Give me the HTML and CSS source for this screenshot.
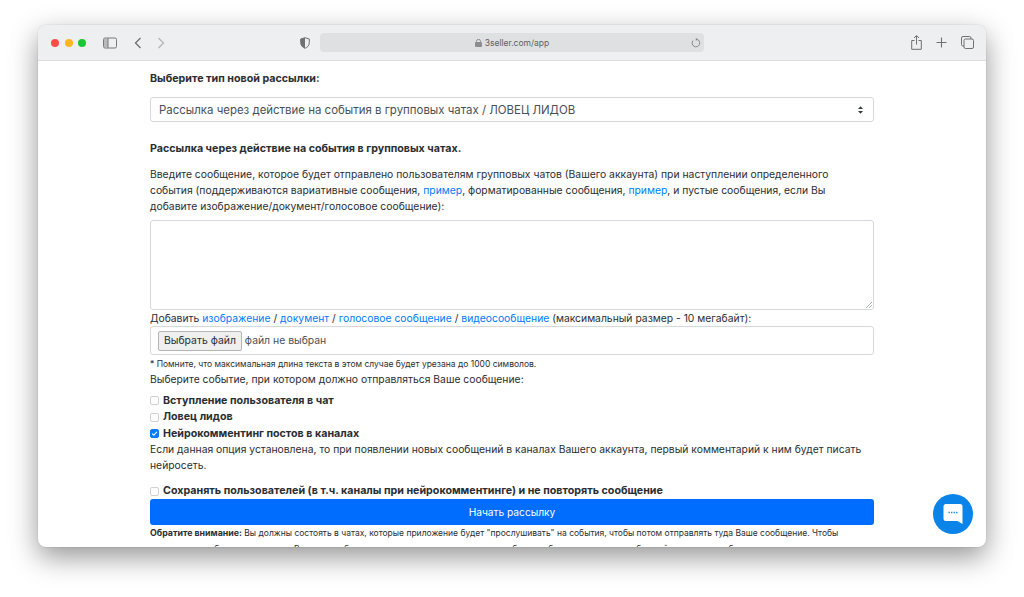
FILE: index.html
```html
<!DOCTYPE html>
<html lang="ru">
<head>
<meta charset="utf-8">
<title>3seller</title>
<link rel="stylesheet" href="styles.css">
</head>
<body>
<div class="window">
  <header class="toolbar">
    <div class="lights"><i class="light red"></i><i class="light yellow"></i><i class="light green"></i></div>
    <svg class="ic sidebar" width="14" height="12" viewBox="0 0 14 12"><rect x=".5" y="1" width="13" height="10" rx="1.5" fill="none" stroke="#77797c"/><path d="M1 2h4v8H1z" fill="#b9babc"/><path d="M5 1v10" stroke="#77797c"/></svg>
    <svg class="ic back" width="8" height="12" viewBox="0 0 8 12"><path d="M6.5 1 1.5 6l5 5" fill="none" stroke="#6e7073" stroke-width="1.3"/></svg>
    <svg class="ic fwd" width="8" height="12" viewBox="0 0 8 12"><path d="M1.5 1l5 5-5 5" fill="none" stroke="#b4b6b8" stroke-width="1.3"/></svg>
    <svg class="ic shield" width="10" height="12" viewBox="0 0 10 12"><path d="M5 .7 9.3 2v3.6c0 3-2 4.8-4.3 5.7C2.700 10.400.7 8.600.7 5.600V2z" fill="none" stroke="#6e7073"/><path d="M5 .7V11.300C2.700 10.400.7 8.600.7 5.600V2z" fill="#6e7073"/></svg>
    <div class="url">
      <span class="url-text"><svg class="lock" width="7" height="8" viewBox="0 0 7 8"><rect y="3" width="7" height="5" rx="1" fill="#8b8d90"/><path d="M1.500 3.500V2.300a2 2 0 0 1 4 0v1.200" fill="none" stroke="#8b8d90"/></svg>3seller.com/app</span>
      <svg class="reload" width="10" height="10" viewBox="0 0 10 10"><path d="M5.800 1.300A3.800 3.800 0 1 1 2 2.600" fill="none" stroke="#85878a"/><path d="M4.800 0v2.800L7 1.400z" fill="#85878a"/></svg>
    </div>
    <div class="actions">
      <svg width="11" height="15" viewBox="0 0 11 15"><path d="M3.500 5.500H.7v8.800h9.600V5.500H7.500M5.500 9.500V1M3 3l2.500-2.500L8 3" fill="none" stroke="#6e7073"/></svg>
      <svg width="11" height="11" viewBox="0 0 11 11"><path d="M5.500.5v10M.5 5.500h10" fill="none" stroke="#6e7073" stroke-width="1.100"/></svg>
      <svg width="13" height="13" viewBox="0 0 13 13"><rect x="3" y="3" width="9.500" height="9.500" rx="1.500" fill="none" stroke="#6e7073"/><path d="M3 10H2A1.500 1.500 0 0 1 .5 8.500V2A1.500 1.500 0 0 1 2 .5h6.500A1.500 1.500 0 0 1 10 2v1" fill="none" stroke="#6e7073"/></svg>
    </div>
  </header>
  <main class="page">
    <p class="bold title">Выберите тип новой рассылки:</p>
    <div class="select"><span>Рассылка через действие на события в групповых чатах / ЛОВЕЦ ЛИДОВ</span>
      <svg width="5" height="8" viewBox="0 0 6 9"><path d="M3 0 6 3.400H0zM3 9 0 5.600h6z" fill="#343a40"/></svg></div>
    <p class="bold sub">Рассылка через действие на события в групповых чатах.</p>
    <p class="text intro">Введите сообщение, которое будет отправлено пользователям групповых чатов (Вашего аккаунта) при наступлении определенного события (поддерживаются вариативные сообщения, <a>пример</a>, форматированные сообщения, <a>пример</a>, и пустые сообщения, если Вы добавите изображение/документ/голосовое сообщение):</p>
    <div class="area">
      <svg class="grip" width="6" height="6" viewBox="0 0 6 6"><path d="M6 0 0 6M6 3 3 6" stroke="#8d8f92" stroke-width=".7"/></svg>
    </div>
    <p class="text add">Добавить <a>изображение</a> / <a>документ</a> / <a>голосовое сообщение</a> / <a>видеосообщение</a> (максимальный размер - 10 мегабайт):</p>
    <div class="file"><span class="file-btn">Выбрать файл</span><span class="file-none">файл не выбран</span></div>
    <p class="small note">* Помните, что максимальная длина текста в этом случае будет урезана до 1000 символов.</p>
    <p class="text choose">Выберите событие, при котором должно отправляться Ваше сообщение:</p>
    <div class="check-row first"><i class="box"></i><b>Вступление пользователя в чат</b></div>
    <div class="check-row"><i class="box"></i><b>Ловец лидов</b></div>
    <div class="check-row"><i class="box on"><svg width="9" height="9" viewBox="0 0 9 9"><path d="M1.500 4.700 3.600 6.800 7.500 2.300" fill="none" stroke="#fff" stroke-width="1.400"/></svg></i><b>Нейрокомментинг постов в каналах</b></div>
    <p class="text hint">Если данная опция установлена, то при появлении новых сообщений в каналах Вашего аккаунта, первый комментарий к ним будет писать нейросеть.</p>
    <div class="check-row save"><i class="box"></i><b>Сохранять пользователей (в т.ч. каналы при нейрокомментинге) и не повторять сообщение</b></div>
    <div class="submit">Начать рассылку</div>
    <p class="small warn"><b>Обратите внимание:</b> Вы должны состоять в чатах, которые приложение будет "прослушивать" на события, чтобы потом отправлять туда Ваше сообщение. Чтобы приложение работало корректно, Вы должны быть участником всех чатов, в которых будет работать рассылка сообщений и получать события.</p>
  </main>
  <div class="chat">
    <svg width="20" height="22" viewBox="0 0 20 22"><path d="M3 1h14a2.500 2.500 0 0 1 2.500 2.500V21l-5-3H3A2.500 2.500 0 0 1 .5 15.500v-12A2.500 2.500 0 0 1 3 1z" fill="#fff"/><path d="M5.500 9.500h9" stroke="#0a84e8" stroke-width="1.300" stroke-dasharray="1.300 1.250"/></svg>
  </div>
</div>
</body>
</html>
```

FILE: styles.css
```css
* { box-sizing: border-box; }
html, body { margin: 0; height: 597px; overflow: hidden; background: #fff; }
body { padding: 25px 38px 50px; font-family: Inter, "Noto Sans", sans-serif; color: #2a2e32; }
p { margin: 0; }
.window {
  position: relative; height: 522px; border-radius: 8px; overflow: hidden;
  background: #fff;
  box-shadow: 0 0 1px rgba(0,0,0,.35);
}
body::before {
  content: ""; position: absolute; left: 38px; top: 25px; width: 948px; height: 522px;
  border-radius: 8px; box-shadow: 0 10px 28px rgba(0,0,0,.42);
}
.toolbar {
  height: 36px; display: flex; align-items: center; background: #eeeff1;
  border-bottom: 1px solid #dcdddf; padding-left: 13px;
}
.lights { display: flex; gap: 5.500px; }
.light { width: 8px; height: 8px; border-radius: 50%; }
.red { background: #ff4d45; }
.yellow { background: #fdb71e; }
.green { background: #1fc435; }
.ic { flex: none; }
.sidebar { margin-left: 17px; }
.back { margin-left: 17px; }
.fwd { margin-left: 15px; }
.shield { margin-left: 135px; }
.url {
  width: 384px; height: 19px; margin-left: 10px; border-radius: 4px; background: #dfe0e2;
  display: flex; align-items: center; justify-content: center; position: relative;
  font-size: 8.500px; color: #5f6164;
}
.url-text { display: flex; align-items: center; gap: 3px; }
.reload { position: absolute; right: 3px; top: 5px; }
.actions { display: flex; align-items: center; gap: 14px; margin-left: 207px; }
.page { padding: 0 112px; font-size: 10.350px; line-height: 16px; position: relative; }
.bold, b { font-weight: 700; font-size: 10.700px; }
.title { margin-top: 10px; }
.select {
  height: 25px; margin-top: 10px; padding: 0 10px 0 8px; display: flex; align-items: center; justify-content: space-between;
  border: 1px solid #d5d9dd; border-radius: 3px; color: #495057; font-size: 11.450px;
}
.sub { margin-top: 19px; }
.intro { margin-top: 9px; }
a { color: #007bff; }
.area { height: 90px; margin-top: 6px; border: 1px solid #d5d9dd; border-radius: 3px; position: relative; }
.grip { position: absolute; right: 1px; bottom: 1px; }
.add { margin-top: 1px; line-height: 15px; }
.file {
  height: 29px; display: flex; align-items: center; padding-left: 7px;
  border: 1px solid #d5d9dd; border-radius: 3px;
  color: #495057; font-size: 10.400px;
}
.file-btn {
  height: 20px; line-height: 18px; padding: 0 5px; margin-right: 3px;
  border: 1px solid #b5b5b5; border-radius: 2px; background: #efefef; color: #2a2e32;
}
.small { font-size: 8.500px; line-height: 16px; }
.small b { font-size: 8.800px; }
.note { margin-top: 1px; }
.choose { margin-top: -1px; }
.check-row { display: flex; align-items: center; height: 16.500px; }
.first { margin-top: 5.500px; }
.box {
  width: 9px; height: 9px; border: 1px solid #cfd1d4; border-radius: 2px; margin-right: 4px; background: #fff;
  display: flex; align-items: center; justify-content: center; flex: none;
}
.on { background: #0a7aff; border-color: #0a7aff; }
.hint { margin-top: -1px; }
.save { margin-top: 10.500px; height: 15px; }
.submit {
  height: 26px; background: #006dff; border-radius: 3px; color: #fff;
  display: flex; align-items: center; justify-content: center; font-size: 10.200px;
}
.chat {
  position: absolute; left: 895px; top: 469px; width: 40px; height: 40px; border-radius: 50%;
  background: #0a84e8; display: flex; align-items: center; justify-content: center;
}
```
